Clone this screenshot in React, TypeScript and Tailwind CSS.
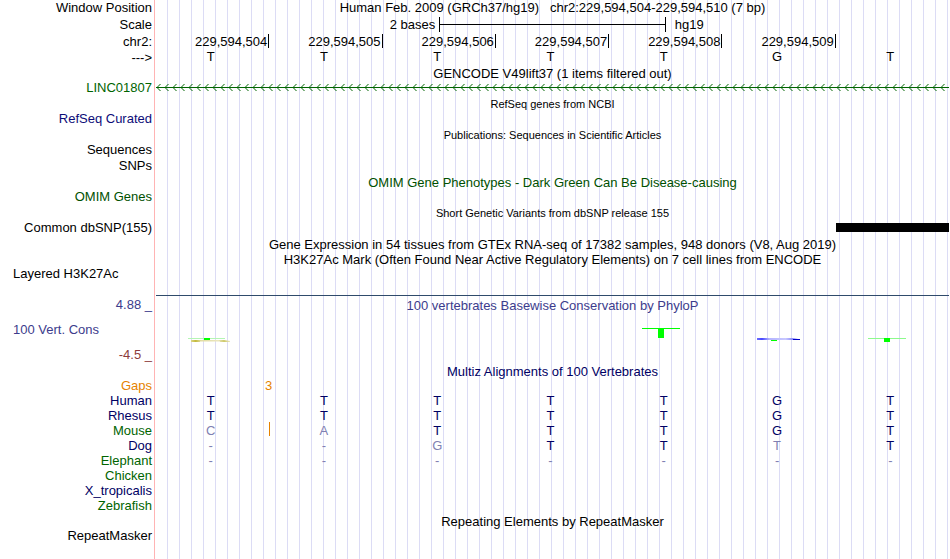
import React from "react";

interface RowProps {
  label?: string;
  labelClass?: string;
  className?: string;
  children?: React.ReactNode;
}

const BASES = ["T", "T", "T", "T", "T", "G", "T"];

const POSITIONS = [
  "229,594,504",
  "229,594,505",
  "229,594,506",
  "229,594,507",
  "229,594,508",
  "229,594,509",
];

const species = [
  { name: "Human", color: "text-[#000064]", seq: "TTTTTGT" },
  { name: "Rhesus", color: "text-[#000064]", seq: "TTTTTGT" },
  { name: "Mouse", color: "text-[#006400]", seq: "caTTTGT", insert: true },
  { name: "Dog", color: "text-[#000064]", seq: "--gTTtT" },
  { name: "Elephant", color: "text-[#006400]", seq: "-------" },
  { name: "Chicken", color: "text-[#006400]", seq: "" },
  { name: "X_tropicalis", color: "text-[#000064]", seq: "" },
  { name: "Zebrafish", color: "text-[#006400]", seq: "" },
];

const Row: React.FC<RowProps> = ({
  label,
  labelClass = "text-right",
  className = "h-[15px] leading-[14px]",
  children,
}) => (
  <div className={`flex ${className}`}>
    <div
      className={`w-[155px] shrink-0 border-r border-[#ffb4b4] pr-[2px] pl-[13px] whitespace-nowrap ${labelClass}`}
    >
      {label}
    </div>
    <div className="ml-px min-w-0 flex-1 bg-[repeating-linear-gradient(90deg,transparent_0_11px,#dcdcf5_11px_12px)]">
      {children}
    </div>
  </div>
);

const Title: React.FC<{ className?: string; children: React.ReactNode }> = ({
  className = "",
  children,
}) => (
  <p className={`text-center whitespace-pre ${className}`}>{children}</p>
);

const BaseColumns: React.FC<{
  children: React.ReactNode;
  className?: string;
}> = ({ children, className = "" }) => (
  <div className={`grid h-full grid-cols-7 text-center ${className}`}>
    {children}
  </div>
);

// upper case is a match to the human base, anything else is drawn faded
const Sequence: React.FC<{ seq: string }> = ({ seq }) => (
  <BaseColumns>
    {seq.split("").map((base, i) => (
      <span
        key={i}
        className={`pr-1 ${/[A-Z]/.test(base) ? "text-[#000064]" : "text-[#8080b2]"}`}
      >
        {base.toUpperCase()}
      </span>
    ))}
  </BaseColumns>
);

const GeneArrows = () => (
  <svg className="block h-[15px] w-full" aria-hidden="true">
    <defs>
      <pattern id="strand" width="8" height="15" patternUnits="userSpaceOnUse">
        <path
          d="M4.5 3 L1 6.5 L4.5 10"
          fill="none"
          stroke="#006400"
          strokeWidth="1"
        />
        <rect y="6" width="8" height="1" fill="#006400" />
      </pattern>
    </defs>
    <rect width="100%" height="15" fill="url(#strand)" />
  </svg>
);

const wiggle: Record<number, React.ReactNode> = {
  0: (
    <>
      <defs>
        <linearGradient id="olive">
          <stop offset="0" stopColor="#dcd78c" />
          <stop offset="0.12" stopColor="#c3b93c" />
          <stop offset="0.25" stopColor="#e1dca0" />
          <stop offset="0.7" stopColor="#ebe6be" />
          <stop offset="0.85" stopColor="#cdc869" />
          <stop offset="1" stopColor="#ebe6be" />
        </linearGradient>
      </defs>
      <rect x="32" y="15" width="37" height="1" fill="#b4f5b4" />
      <rect x="48" y="15" width="6" height="2" fill="#00ff00" />
      <path d="M35 17H68L74 18V19H64V18.5H44V19H35Z" fill="url(#olive)" />
    </>
  ),
  4: (
    <>
      <rect x="33" y="5" width="38" height="1" fill="#00ff00" />
      <rect x="49" y="5" width="6" height="10" fill="#00ff00" />
    </>
  ),
  5: (
    <>
      <defs>
        <linearGradient id="blue">
          <stop offset="0" stopColor="#6e6eff" />
          <stop offset="0.12" stopColor="#4646ff" />
          <stop offset="0.3" stopColor="#b4b4ff" />
          <stop offset="0.7" stopColor="#c8c8ff" />
          <stop offset="1" stopColor="#5a5af5" />
        </linearGradient>
      </defs>
      <path d="M35 15H70L76 16V17H35Z" fill="url(#blue)" />
      <rect x="71" y="16" width="7" height="1" fill="#0000c8" />
      <rect x="49" y="17" width="6" height="1" fill="#00ff00" />
    </>
  ),
  6: (
    <>
      <rect x="32" y="15" width="38" height="1" fill="#8cfa8c" />
      <rect x="48" y="15" width="6" height="4" fill="#00ff00" />
    </>
  ),
};

export default function App() {
  return (
    <main className="flex min-h-screen flex-col overflow-hidden bg-white pr-px font-['Liberation_Sans',Arial,sans-serif] text-[13px] leading-[16px] text-black">
      <Row label="Window Position" className="h-[17px]">
        <Title>
          {"Human Feb. 2009 (GRCh37/hg19)   chr2:229,594,504-229,594,510 (7 bp)"}
        </Title>
      </Row>
      <Row label="Scale" className="h-[17px]">
        {/* half-base columns: the ruler covers two whole bases */}
        <div className="grid grid-cols-14 whitespace-nowrap">
          <span className="col-span-5 pr-1 text-right">2 bases</span>
          <span className="col-span-4 flex h-[15px] items-center border-x border-black">
            <span className="h-px w-full bg-black" />
          </span>
          <span className="col-span-5 pl-[9px]">hg19</span>
        </div>
      </Row>
      <Row label="chr2:" className="h-4">
        <BaseColumns>
          {POSITIONS.map((pos) => (
            <span
              key={pos}
              className="h-[14px] border-r border-black pr-px text-right"
            >
              {pos}
            </span>
          ))}
        </BaseColumns>
      </Row>
      <Row label="--->" className="h-[15px]">
        <BaseColumns className="leading-[14px]">
          {BASES.map((base, i) => (
            <span key={i} className="pr-1">
              {base}
            </span>
          ))}
        </BaseColumns>
      </Row>

      <Row className="h-4">
        <Title className="leading-[18px]">
          GENCODE V49lift37 (1 items filtered out)
        </Title>
      </Row>
      <Row label="LINC01807" labelClass="text-right text-[#006400]">
        <GeneArrows />
      </Row>
      <Row className="h-4">
        <Title className="text-[11px]">RefSeq genes from NCBI</Title>
      </Row>
      <Row label="RefSeq Curated" labelClass="text-right text-[#0c0c78]" />
      <Row className="h-4">
        <Title className="text-[11px]">
          Publications: Sequences in Scientific Articles
        </Title>
      </Row>
      <Row label="Sequences" />
      <Row label="SNPs" className="h-4" />
      <Row className="h-4">
        <Title className="leading-[18px] text-[#005000]">
          OMIM Gene Phenotypes - Dark Green Can Be Disease-causing
        </Title>
      </Row>
      <Row label="OMIM Genes" labelClass="text-right text-[#005000]" />
      <Row className="h-4">
        <Title className="text-[11px]">
          Short Genetic Variants from dbSNP release 155
        </Title>
      </Row>
      <Row label="Common dbSNP(155)">
        <BaseColumns className="pt-[2px]">
          <span className="col-start-7 h-[9px] bg-black" />
        </BaseColumns>
      </Row>
      <Row className="h-4">
        <Title className="leading-[18px]">
          Gene Expression in 54 tissues from GTEx RNA-seq of 17382 samples, 948
          donors (V8, Aug 2019)
        </Title>
      </Row>
      <Row className="h-[15px]">
        <Title>
          H3K27Ac Mark (Often Found Near Active Regulatory Elements) on 7 cell
          lines from ENCODE
        </Title>
      </Row>
      <Row
        label="Layered H3K27Ac"
        labelClass="text-left"
        className="h-7 leading-[14px]"
      />

      <div className="flex h-[69px]">
        <div className="flex w-[155px] shrink-0 flex-col justify-between border-r border-[#ffb4b4] pt-[2px] pr-[2px] pb-px pl-[13px] text-right text-[#3c3c8c]">
          <span>4.88 _</span>
          <span className="text-left">100 Vert. Cons</span>
          <span className="text-[#8c3c3c]">-4.5 _</span>
        </div>
        <div className="ml-px min-w-0 flex-1 border-t border-[#2f4b6b] bg-[repeating-linear-gradient(90deg,transparent_0_11px,#dcdcf5_11px_12px)] pt-[2px]">
          <Title className="text-[#3c3c8c]">
            100 vertebrates Basewise Conservation by PhyloP
          </Title>
          <div className="grid grid-cols-7 pt-[9px]">
            {BASES.map((_, i) => (
              <svg
                key={i}
                className="block h-6 w-full overflow-visible"
                aria-hidden="true"
              >
                {wiggle[i]}
              </svg>
            ))}
          </div>
        </div>
      </div>

      <Row className="h-[15px]">
        <Title className="text-[#000064]">
          Multiz Alignments of 100 Vertebrates
        </Title>
      </Row>
      <Row label="Gaps" labelClass="text-right text-[#e68200]">
        <BaseColumns className="text-[#e68200]">
          <span className="-mr-[3px] text-right">3</span>
        </BaseColumns>
      </Row>
      {species.map(({ name, color, seq, insert }) => (
        <Row key={name} label={name} labelClass={`text-right ${color}`}>
          <div className="relative h-full">
            <Sequence seq={seq} />
            {insert && (
              <span className="absolute -top-[2px] left-[calc(100%/7)] h-[14px] w-px bg-[#e68200]" />
            )}
          </div>
        </Row>
      ))}

      <Row className="h-[15px]">
        <Title>Repeating Elements by RepeatMasker</Title>
      </Row>
      <Row label="RepeatMasker" className="flex-1 leading-[14px]" />
    </main>
  );
}
